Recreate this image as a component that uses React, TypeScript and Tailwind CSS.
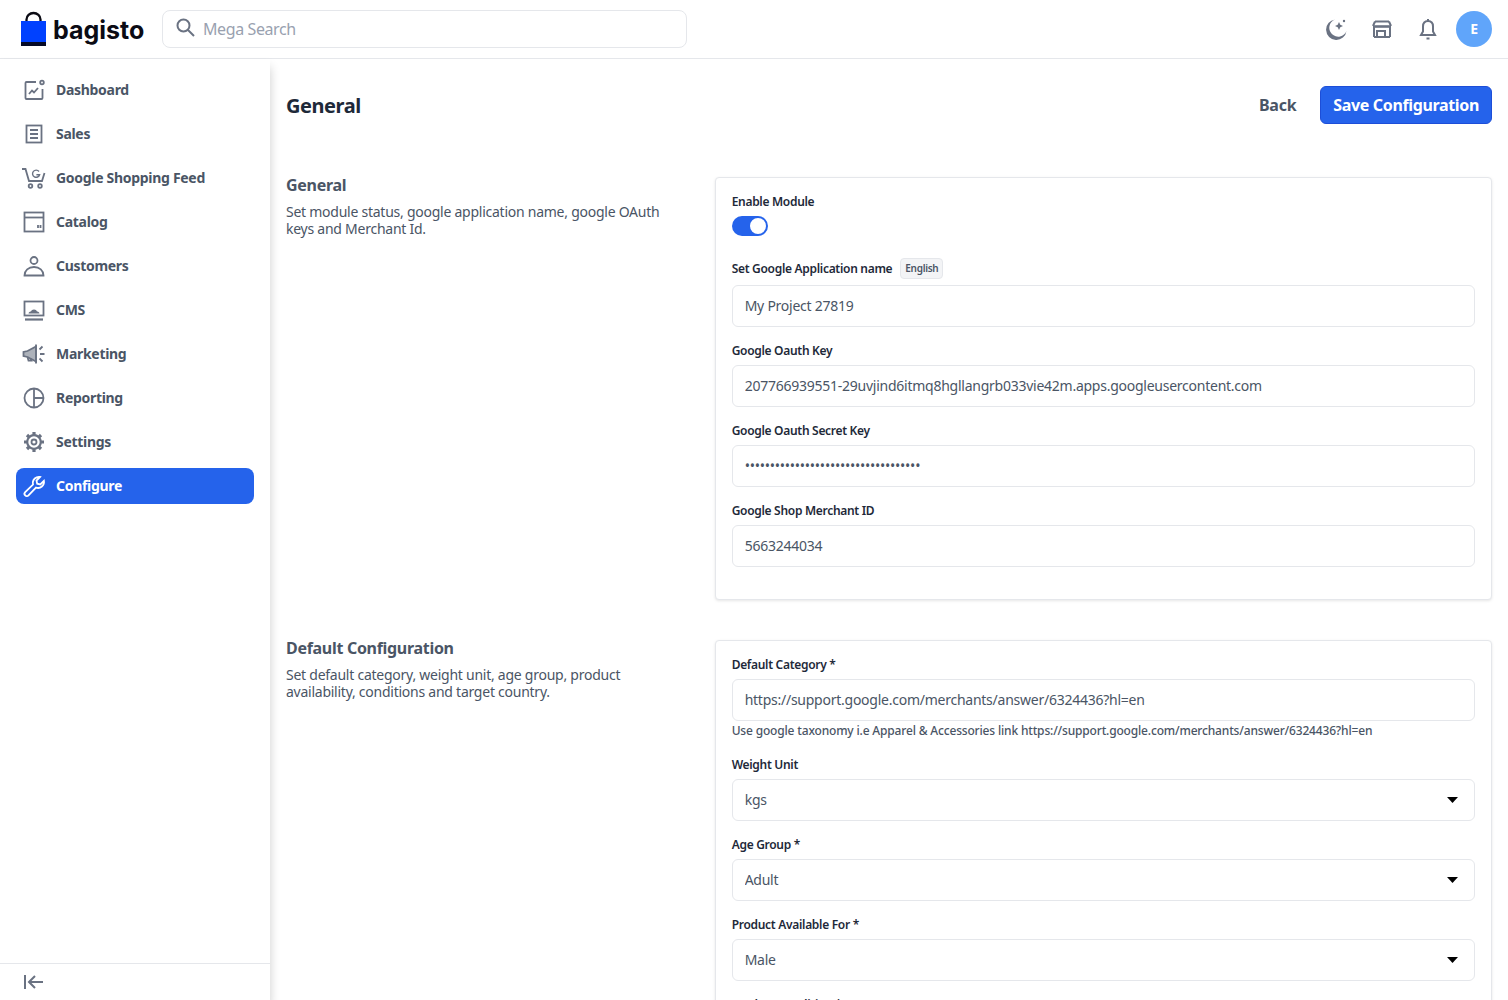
import { useState, type ReactNode } from "react"

const font = "font-['Noto_Sans',sans-serif]"

const icon = "size-6 shrink-0 fill-none stroke-current stroke-[1.8]"

const navIcons: Record<string, ReactNode> = {
    dashboard: (
        <svg viewBox="0 0 24 24" className={ icon }>
            <path d="M14 4H4.500a1 1 0 0 0-1 1v15a1 1 0 0 0 1 1h15a1 1 0 0 0 1-1v-9" />
            <circle cx="20" cy="4.500" r="1.800" />
            <path d="M7 16l3-3.500 2 2 4-4.500" />
        </svg>
    ),
    sales: (
        <svg viewBox="0 0 24 24" className={ icon }>
            <rect x="4.500" y="3.500" width="15" height="17" />
            <path d="M8 8h8M8 12h8M8 16h8" />
        </svg>
    ),
    google: (
        <svg viewBox="0 0 24 24" className={ icon }>
            <path d="M0 3h3.500l3.500 12h13l2.500-8" />
            <circle cx="8.500" cy="20" r="1.800" />
            <circle cx="18" cy="20" r="1.800" />
            <path d="M17 5.500a3.600 3.600 0 1 0 .6 3.200h-3.200" strokeWidth="1.400" />
        </svg>
    ),
    catalog: (
        <svg viewBox="0 0 24 24" className={ icon }>
            <rect x="2.500" y="2.500" width="19" height="19" />
            <path d="M2.500 7.500h19" />
            <path d="M16 18v-3M18.500 18v-3" />
        </svg>
    ),
    customers: (
        <svg viewBox="0 0 24 24" className={ icon }>
            <circle cx="12" cy="6.500" r="3.500" />
            <path d="M2.500 21.500h19c0-5-4-8.500-9.500-8.500s-9.500 3.500-9.500 8.500z" />
        </svg>
    ),
    cms: (
        <svg viewBox="0 0 24 24" className={ icon }>
            <rect x="2.500" y="3.500" width="19" height="14" />
            <path d="M3 21.500h18" strokeWidth="2.200" />
            <path d="M6.500 15.500c.3-1.500 1.500-2 2.500-2 .3-1.300 1.500-2 3-2s2.700.7 3 2c1 0 2.200.5 2.500 2z" fill="currentColor" stroke="none" />
        </svg>
    ),
    marketing: (
        <svg viewBox="0 0 24 24" className={ icon }>
            <path d="M1.500 10v4l4 1 8.500 4.500v-15L5.500 9z" fill="currentColor" fillOpacity="0.55" />
            <path d="M14 2.500v19" />
            <path d="M5.500 15l1 3.500h3l-.8-2" />
            <path d="M17.500 7.500l3-3M18 12h4.500M17.500 16.500l3 3" />
        </svg>
    ),
    reporting: (
        <svg viewBox="0 0 24 24" className={ icon }>
            <circle cx="12" cy="12" r="9.500" />
            <path d="M12 2.500v19M12 12h9.500" />
        </svg>
    ),
    settings: (
        <svg viewBox="0 0 24 24" className="size-6 shrink-0 fill-none stroke-current">
            <circle cx="12" cy="12" r="2.500" strokeWidth="1.800" />
            <circle cx="12" cy="12" r="6.800" strokeWidth="2.200" />
            <path d="M12 2v3.500M12 18.500V22M2 12h3.500M18.500 12H22M5 5l2.400 2.400M16.600 16.600L19 19M19 5l-2.400 2.400M7.400 16.600L5 19" strokeWidth="3.200" />
        </svg>
    ),
    configure: (
        <svg viewBox="0 0 24 24" className={ icon }>
            <path d="M14.700 3.300a6 6 0 0 1 3.300-.3l-3.500 3.600.7 3.100 3.100.7 3.600-3.500a6 6 0 0 1-7.900 6.700l-7.500 7.800a2.300 2.300 0 0 1-3.300-3.300l7.800-7.500a6 6 0 0 1 3.700-7.300z" />
        </svg>
    ),
}

const navItems = [
    { key: "dashboard", label: "Dashboard" },
    { key: "sales", label: "Sales" },
    { key: "google", label: "Google Shopping Feed" },
    { key: "catalog", label: "Catalog" },
    { key: "customers", label: "Customers" },
    { key: "cms", label: "CMS" },
    { key: "marketing", label: "Marketing" },
    { key: "reporting", label: "Reporting" },
    { key: "settings", label: "Settings" },
    { key: "configure", label: "Configure" },
]

const inputClass = "h-[42px] w-full rounded-md border border-gray-200 bg-white px-3 text-sm text-gray-600 outline-none"

function Label({ children }: Readonly<{ children: ReactNode }>) {
    return <label className="mb-1.5 flex h-4 items-center gap-2 text-xs leading-4 font-semibold tracking-[-0.3px] text-gray-800">{ children }</label>
}

function TextField({ label, value, type = "text" }: Readonly<{ label: string, value: string, type?: string }>) {
    return (
        <div className="mb-4">
            <Label>{ label }</Label>
            <input type={ type } defaultValue={ value } className={ `${ inputClass } pb-0.5` } />
        </div>
    )
}

function SelectField({ label, value }: Readonly<{ label: string, value: string }>) {
    return (
        <div className="mb-4">
            <Label>{ label }</Label>
            <div className="relative">
                <select defaultValue={ value } className={ `${ inputClass } appearance-none` }>
                    <option>{ value }</option>
                </select>
                <svg viewBox="0 0 11 6" className="pointer-events-none absolute top-[18px] right-[17px] h-1.5 w-[11px] fill-black">
                    <path d="M0 0h11L5.500 6z" />
                </svg>
            </div>
        </div>
    )
}

function Toggle() {
    const [ on, setOn ] = useState(true)

    return (
        <button
            type="button"
            aria-label="Enable Module"
            onClick={ () => setOn(!on) }
            className={ `mt-[1px] flex h-5 w-9 items-center rounded-full px-0.5 ${ on ? "justify-end bg-[#2563eb]" : "justify-start bg-gray-200" }` }>
            <span className="size-4 rounded-full bg-white" />
        </button>
    )
}

function Section({ title, description, children }: Readonly<{ title: string, description: string, children: ReactNode }>) {
    return (
        <div className="grid grid-cols-[1fr_2fr] gap-10">
            <div>
                <p className="text-base leading-4 font-bold tracking-[-0.3px] text-gray-600">{ title }</p>
                <p className="mt-2.5 text-sm leading-[17px] text-gray-600">{ description }</p>
            </div>
            <div className="rounded border border-gray-200 bg-white p-4 shadow-[0_1px_3px_rgba(0,0,0,0.1)]">
                { children }
            </div>
        </div>
    )
}

export default function App() {
    return (
        <div className={ `flex h-screen flex-col overflow-hidden bg-white tracking-[-0.25px] ${ font }` }>
            <header className="flex h-[59px] shrink-0 items-center justify-between border-b border-gray-200 bg-white pr-4 pl-[21px]">
                <div className="flex items-center">
                    <div className="flex w-[141px] items-center gap-[6px]">
                        <svg viewBox="0 0 26 35" className="h-[35px] w-[26px] shrink-0 overflow-visible">
                            <path d="M5.500 10V7.500a7 6.500 0 0 1 14 0V10" fill="none" stroke="#0b0b14" strokeWidth="2.300" />
                            <path d="M0 9h25v21H0z" fill="#0041ff" />
                            <path d="M0 30h25v4H0z" fill="#060a26" />
                        </svg>
                        <span className="pt-0.5 font-['Inter',sans-serif] text-[25px] leading-none font-bold tracking-normal text-[#0b0b14]">bagisto</span>
                    </div>
                    <div className="relative">
                        <svg viewBox="0 0 24 24" className="pointer-events-none absolute top-[6px] left-[11px] size-6 fill-none stroke-gray-500 stroke-2">
                            <circle cx="10.500" cy="9.500" r="6" />
                            <path d="M15 14l6 6" />
                        </svg>
                        <input
                            placeholder="Mega Search"
                            className="h-[38px] w-[525px] rounded-lg border border-gray-200 bg-white pr-10 pl-10 text-base tracking-[-0.4px] text-gray-600 outline-none placeholder:text-gray-400" />
                    </div>
                </div>
                <div className="flex items-center gap-[10px] text-gray-500">
                    <svg viewBox="0 0 24 24" className="size-9 fill-current p-1.5">
                        <path d="M11 2.500A10.250 10.250 0 1 0 22.500 14A8.900 8.900 0 1 1 11 2.500z" />
                        <path d="M15 5l1.300 2.700L19 9l-2.700 1.300L15 13l-1.300-2.700L11 9l2.700-1.300z" />
                        <circle cx="20" cy="4" r="1.200" />
                    </svg>
                    <svg viewBox="0 0 24 24" className="size-9 fill-none stroke-current stroke-2 p-1.5">
                        <path d="M5 4.500h14" />
                        <path d="M3 9.500h18" strokeWidth="2.600" />
                        <path d="M5 4.500L3 9M19 4.500L21 9" />
                        <path d="M4 10v10M20 10v10" />
                        <path d="M7 20v-6h8v6" />
                        <path d="M4 20h16" />
                    </svg>
                    <svg viewBox="0 0 24 24" className="size-9 fill-none stroke-current stroke-2 p-1.5">
                        <path d="M12 4c-3.300 0-5 2.500-5 5.500v5l-2 3.500h14l-2-3.500v-5C17 6.500 15.300 4 12 4z" />
                        <path d="M12 2v2M10.500 21.500h3" />
                    </svg>
                    <div className="flex size-9 items-center justify-center rounded-full bg-[#60a5fa] text-sm font-bold text-white">E</div>
                </div>
            </header>

            <div className="flex min-h-0 flex-1">
                <aside className="flex w-[270px] shrink-0 flex-col justify-between bg-white shadow-[0_8px_10px_0_rgba(0,0,0,0.2)]">
                    <nav className="flex flex-col gap-2 px-4 pt-[13px]">
                        { navItems.map(item => {
                            const active = item.key === "configure"

                            return (
                                <a
                                    key={ item.key }
                                    href="#"
                                    className={ `flex h-9 items-center gap-[10px] rounded-lg px-1.5 text-sm font-bold tracking-[-0.3px] ${ active ? "bg-[#2563eb] text-white" : "text-gray-600" }` }>
                                    <span className={ active ? "text-white" : "text-gray-500" }>{ navIcons[item.key] }</span>
                                    { item.label }
                                </a>
                            )
                        }) }
                    </nav>
                    <div className="flex h-[37px] items-center border-t border-gray-200 px-[22px]">
                        <svg viewBox="0 0 24 24" className="size-6 fill-none stroke-gray-500 stroke-2">
                            <path d="M3 5v14M21 12H8M13 6l-6 6 6 6" />
                        </svg>
                    </div>
                </aside>

                <main className="min-w-0 flex-1 px-4 pt-[27px]">
                    <div className="mb-[53px] flex h-[38px] items-center justify-between">
                        <h1 className="pt-0.5 text-xl font-bold tracking-[-0.45px] text-gray-800">General</h1>
                        <div className="flex items-center gap-6">
                            <a href="#" className="text-base font-bold text-gray-600">Back</a>
                            <button type="button" className="h-[38px] rounded-md border border-[#1d4ed8] bg-[#2563eb] px-3 text-base font-bold tracking-[-0.35px] text-white">
                                Save Configuration
                            </button>
                        </div>
                    </div>

                    <div className="flex flex-col gap-10">
                        <Section
                            title="General"
                            description="Set module status, google application name, google OAuth keys and Merchant Id.">
                            <Label>Enable Module</Label>
                            <Toggle />
                            <div className="mt-[22px] mb-1.5 flex h-[21px] items-center gap-2 text-xs font-semibold tracking-[-0.3px] text-gray-800">
                                Set Google Application name
                                <span className="rounded border border-gray-200 bg-gray-100 px-1 py-[3px] text-[10px] leading-[13px] font-semibold text-gray-600">English</span>
                            </div>
                            <div className="mb-4">
                                <input type="text" defaultValue="My Project 27819" className={ `${ inputClass } pb-0.5` } />
                            </div>
                            <TextField label="Google Oauth Key" value="207766939551-29uvjind6itmq8hgllangrb033vie42m.apps.googleusercontent.com" />
                            <TextField label="Google Oauth Secret Key" type="password" value="GOCSPX-abcdefghijklmnopqrstuvwxyz12" />
                            <TextField label="Google Shop Merchant ID" value="5663244034" />
                        </Section>

                        <Section
                            title="Default Configuration"
                            description="Set default category, weight unit, age group, product availability, conditions and target country.">
                            <Label>Default Category *</Label>
                            <input type="text" defaultValue="https://support.google.com/merchants/answer/6324436?hl=en" className={ `${ inputClass } pb-0.5` } />
                            <p className="mt-0.5 mb-[18px] text-xs leading-4 font-medium tracking-[-0.17px] text-gray-600">
                                Use google taxonomy i.e Apparel &amp; Accessories link https://support.google.com/merchants/answer/6324436?hl=en
                            </p>
                            <SelectField label="Weight Unit" value="kgs" />
                            <SelectField label="Age Group *" value="Adult" />
                            <SelectField label="Product Available For *" value="Male" />
                            <SelectField label="Product Condition *" value="New" />
                        </Section>
                    </div>
                </main>
            </div>
        </div>
    )
}
